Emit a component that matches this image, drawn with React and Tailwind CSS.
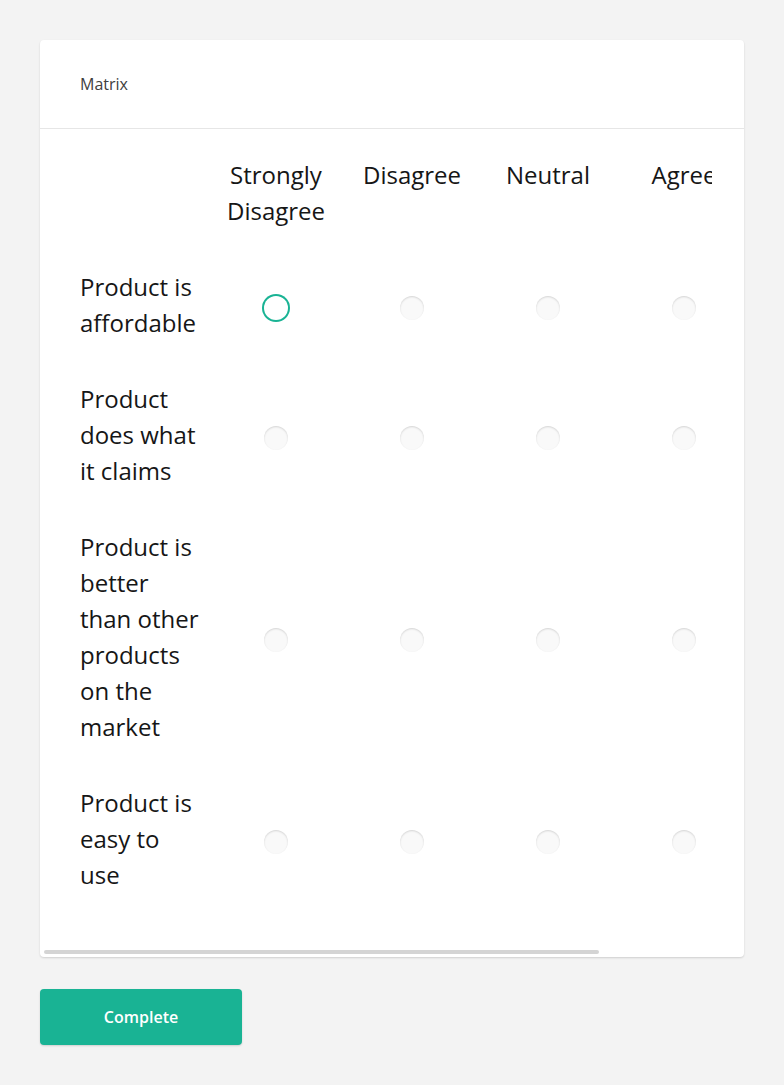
const cols = ["Strongly Disagree", "Disagree", "Neutral", "Agree", "Strongly Agree"];
const rows = [
  "Product is affordable",
  "Product does what it claims",
  "Product is better than other products on the market",
  "Product is easy to use",
];

function Radio({ focused }) {
  if (focused) {
    return (
      <span className="inline-block w-6 h-6 rounded-full bg-white shadow-[0_0_0_2px_#19b394] align-middle" />
    );
  }
  return (
    <span className="inline-block w-6 h-6 rounded-full bg-[#f9f9f9] shadow-[inset_0_1px_2px_rgba(0,0,0,0.15)] align-middle" />
  );
}

export default function App() {
  return (
    <div
      className="min-h-screen bg-[#f3f3f3] px-10 pt-10 pb-10"
      style={{ fontFamily: '"Open Sans", sans-serif' }}
    >
      <div className="bg-white rounded-[4px] shadow-[0_1px_2px_rgba(0,0,0,0.15)]">
        <div className="h-[89px] flex items-center px-10 border-b border-[#e6e6e6]">
          <span className="text-[16px] text-[#404040]">Matrix</span>
        </div>
        <div className="relative mr-8 overflow-hidden pt-[8px] pb-[44px]">
          <table className="table-fixed border-collapse ml-10 w-[808px] text-[24px] leading-[36px] text-[#161616]">
            <colgroup>
              <col className="w-[128px]" />
              <col className="w-[136px]" />
              <col className="w-[136px]" />
              <col className="w-[136px]" />
              <col className="w-[136px]" />
              <col className="w-[136px]" />
            </colgroup>
            <thead>
              <tr>
                <th className="py-5" />
                {cols.map((c) => (
                  <th key={c} className="py-5 px-1 font-normal text-center align-top">
                    {c}
                  </th>
                ))}
              </tr>
            </thead>
            <tbody>
              {rows.map((r, ri) => (
                <tr key={r}>
                  <td className="py-5 pr-1 align-middle">{r}</td>
                  {cols.map((c, ci) => (
                    <td key={c} className="py-5 text-center align-middle">
                      <span className="inline-flex pt-[14px]">
                        <Radio focused={ri === 0 && ci === 0} />
                      </span>
                    </td>
                  ))}
                </tr>
              ))}
            </tbody>
          </table>
          <div className="absolute left-1 bottom-[3px] w-[555px] h-[4px] rounded-full bg-[#d4d4d4]" />
        </div>
      </div>
      <button className="mt-[32px] w-[202px] h-[56px] rounded-[4px] bg-[#19b394] text-white text-[16px] font-semibold shadow-[0_1px_2px_rgba(0,0,0,0.15)]">
        Complete
      </button>
    </div>
  );
}
